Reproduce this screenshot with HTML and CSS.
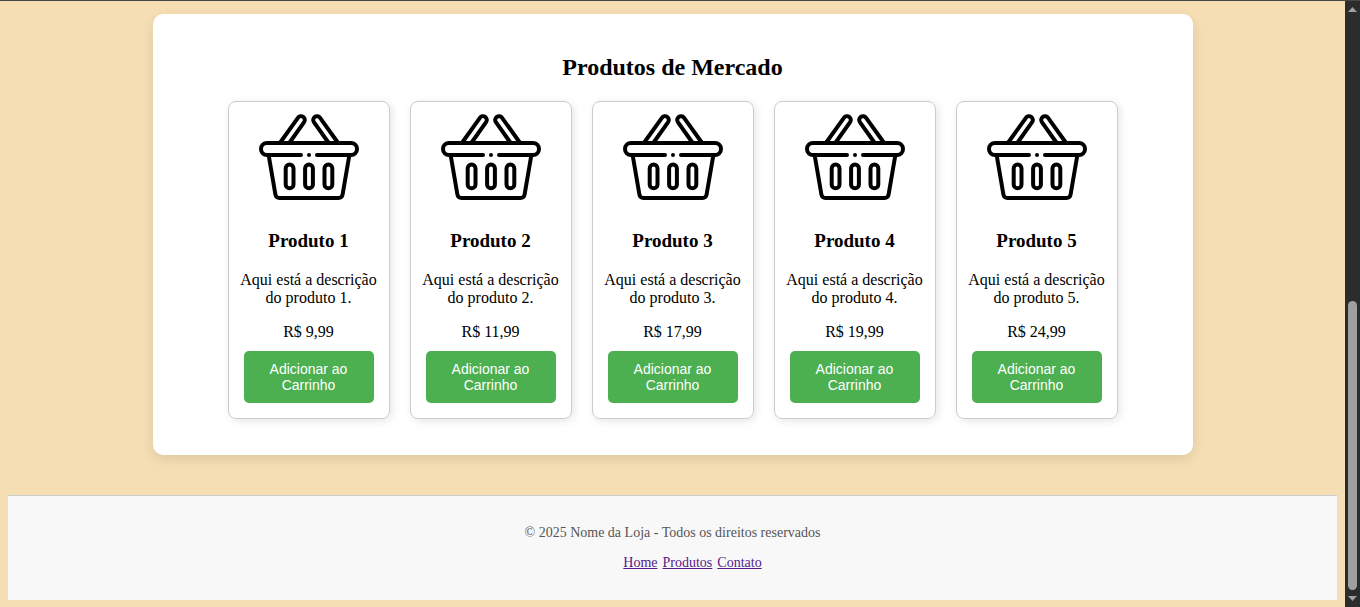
FILE: index.html
```html
<!DOCTYPE html>
<html lang="pt-BR">
<head>
<meta charset="UTF-8">
<meta name="viewport" content="width=device-width, initial-scale=1">
<title>Nome da Loja</title>
<link rel="stylesheet" href="styles.css">
</head>
<body>
<svg class="symbols" aria-hidden="true">
  <symbol id="basket" viewBox="0 0 100 100">
    <g fill="none" stroke="#000" stroke-width="4" stroke-linecap="round" stroke-linejoin="round">
      <path d="M21.6 35 L38.9 10.8 A3.8 3.8 0 0 1 45.1 15.2 L31 35"/>
      <path d="M78.4 35 L61.1 10.8 A3.8 3.8 0 0 0 54.9 15.2 L69 35"/>
      <path d="M42 48 H8 A6 6 0 0 1 8 36 H92 A6 6 0 0 1 92 48 H58"/>
      <path d="M9.8 49 L16.4 87.5 Q17 91 20.5 91 H79.5 Q83 91 83.6 87.5 L90.2 49"/>
      <rect x="26.7" y="57.5" width="7.8" height="23.8" rx="3.9"/>
      <rect x="46.1" y="57.5" width="7.8" height="23.8" rx="3.9"/>
      <rect x="65.5" y="57.5" width="7.8" height="23.8" rx="3.9"/>
    </g>
    <circle cx="50" cy="48" r="2"/>
  </symbol>
</svg>
<div class="window">
  <div class="page">
    <main class="container">
      <h2 class="title">Produtos de Mercado</h2>
      <ul class="products">
        <li class="card">
          <svg class="picture" role="img" aria-label="Produto 1"><use href="#basket"/></svg>
          <h3 class="name">Produto 1</h3>
          <p class="description">Aqui está a descrição do produto 1.</p>
          <p class="price">R$ 9,99</p>
          <button class="add" type="button">Adicionar ao Carrinho</button>
        </li>
        <li class="card">
          <svg class="picture" role="img" aria-label="Produto 2"><use href="#basket"/></svg>
          <h3 class="name">Produto 2</h3>
          <p class="description">Aqui está a descrição do produto 2.</p>
          <p class="price">R$ 11,99</p>
          <button class="add" type="button">Adicionar ao Carrinho</button>
        </li>
        <li class="card">
          <svg class="picture" role="img" aria-label="Produto 3"><use href="#basket"/></svg>
          <h3 class="name">Produto 3</h3>
          <p class="description">Aqui está a descrição do produto 3.</p>
          <p class="price">R$ 17,99</p>
          <button class="add" type="button">Adicionar ao Carrinho</button>
        </li>
        <li class="card">
          <svg class="picture" role="img" aria-label="Produto 4"><use href="#basket"/></svg>
          <h3 class="name">Produto 4</h3>
          <p class="description">Aqui está a descrição do produto 4.</p>
          <p class="price">R$ 19,99</p>
          <button class="add" type="button">Adicionar ao Carrinho</button>
        </li>
        <li class="card">
          <svg class="picture" role="img" aria-label="Produto 5"><use href="#basket"/></svg>
          <h3 class="name">Produto 5</h3>
          <p class="description">Aqui está a descrição do produto 5.</p>
          <p class="price">R$ 24,99</p>
          <button class="add" type="button">Adicionar ao Carrinho</button>
        </li>
      </ul>
    </main>
    <footer class="footer">
      <p class="copyright">© 2025 Nome da Loja - Todos os direitos reservados</p>
      <ul class="links">
        <li><a class="link" href="#home">Home</a></li>
        <li><a class="link" href="#produtos">Produtos</a></li>
        <li><a class="link" href="#contato">Contato</a></li>
      </ul>
    </footer>
  </div>
  <div class="scrollbar" aria-hidden="true">
    <svg class="arrow" viewBox="0 0 9 5"><path d="M4.5 0 L9 5 H0 Z"/></svg>
    <div class="track"><div class="thumb"></div></div>
    <svg class="arrow" viewBox="0 0 9 5"><path d="M0 0 H9 L4.5 5 Z"/></svg>
  </div>
</div>
</body>
</html>
```
FILE: styles.css
```css
* {
  box-sizing: border-box;
}

body {
  margin: 0;
  background: #f5deb3;
  color: #000;
  font-family: "Liberation Serif", "Times New Roman", serif;
  font-size: 16px;
  line-height: 18px;
}

.symbols {
  display: none;
}

.window {
  display: flex;
  min-height: 100vh;
  border-top: 1px solid #474747;
}

.page {
  flex: 1;
  min-width: 0;
  padding: 13px 8px 7px;
}

.container {
  max-width: 1040px;
  margin: 0 auto 40px;
  padding: 40px 20px 36px;
  background: #fff;
  border-radius: 10px;
  box-shadow: 0 4px 12px rgba(0, 0, 0, 0.1);
}

.title {
  margin: 0 0 20px;
  font-size: 24px;
  line-height: 27px;
  text-align: center;
}

.products {
  display: flex;
  flex-wrap: wrap;
  justify-content: center;
  gap: 20px;
  margin: 0;
  padding: 0;
  list-style: none;
}

.card {
  display: flex;
  flex-direction: column;
  align-items: center;
  width: 162px;
  padding: 5px 5px 15px;
  border: 1px solid #ccc;
  border-radius: 8px;
  box-shadow: 2px 2px 8px rgba(0, 0, 0, 0.1);
  text-align: center;
}

.picture {
  width: 100px;
  height: 100px;
  margin-bottom: 23px;
}

.name {
  margin: 0 0 20px;
  font-size: 19px;
  line-height: 21px;
}

.description {
  margin: 0 0 16px;
}

.price {
  margin: 0 0 10px;
}

.add {
  width: 130px;
  padding: 10px;
  border: 0;
  border-radius: 5px;
  background: #4caf50;
  color: #fff;
  font-family: "Liberation Sans", Arial, sans-serif;
  font-size: 14px;
  line-height: 16px;
  cursor: pointer;
}

.footer {
  padding: 29px 20px;
  border-top: 1px solid #ccc;
  background: #f8f8f8;
  color: #555;
  font-size: 14px;
  line-height: 16px;
  text-align: center;
}

.copyright {
  margin: 0 0 14px;
}

.links {
  display: flex;
  justify-content: center;
  gap: 5px;
  margin: 0;
  padding: 0 0 0 40px;
  list-style: none;
}

.link {
  color: #551a8b;
}

.scrollbar {
  display: flex;
  flex-direction: column;
  align-items: center;
  gap: 6px;
  width: 15px;
  padding: 6px 0;
  background: #2c2c2c;
}

.arrow {
  width: 9px;
  height: 5px;
  fill: #9f9f9f;
}

.track {
  display: flex;
  flex: 1;
  flex-direction: column;
  justify-content: flex-end;
}

.thumb {
  width: 9px;
  height: calc(50% + 3px);
  border-radius: 5px;
  background: #9f9f9f;
}
```
